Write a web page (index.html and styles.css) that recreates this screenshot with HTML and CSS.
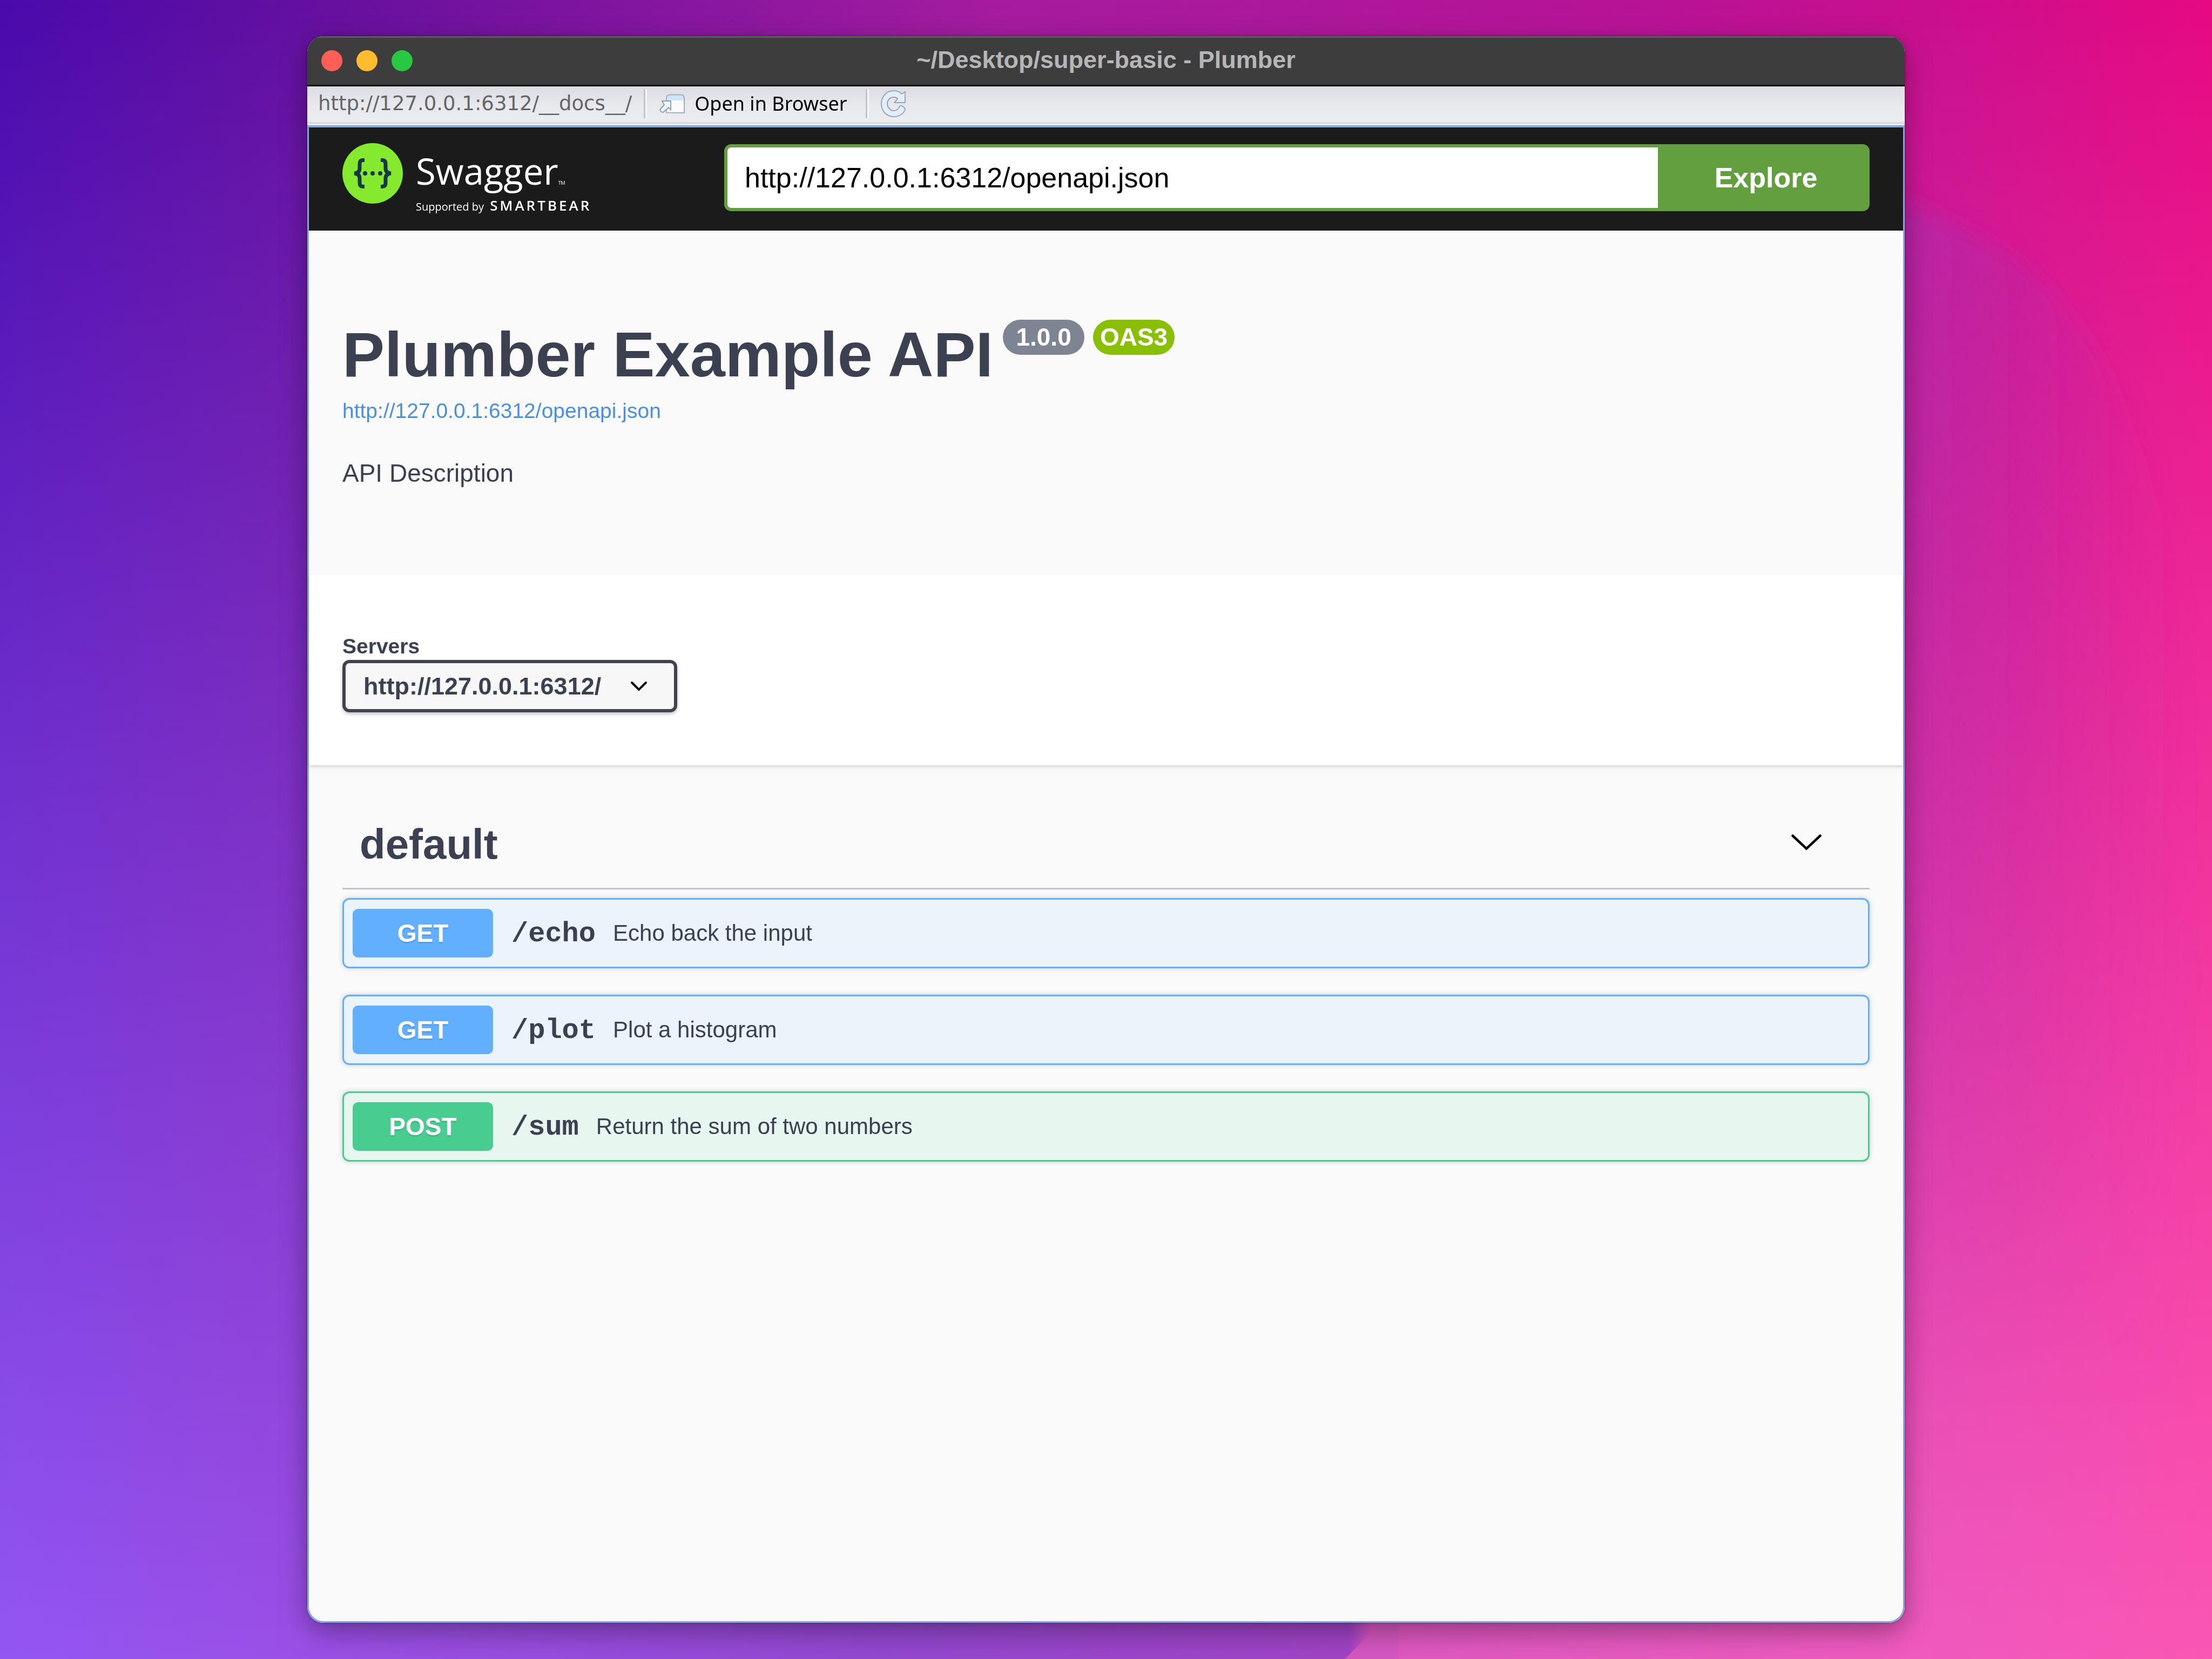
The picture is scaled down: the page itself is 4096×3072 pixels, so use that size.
FILE: index.html
```html
<!DOCTYPE html>
<html lang="en">
<head>
<meta charset="utf-8">
<title>~/Desktop/super-basic - Plumber</title>
<link rel="stylesheet" href="styles.css">
</head>
<body>
<svg class="wallpaper" viewBox="0 0 4096 3072" preserveAspectRatio="none" aria-hidden="true">
  <defs>
    <linearGradient id="base" x1="0" y1="0" x2="1" y2="0">
      <stop offset="0" stop-color="#4a0aac"/>
      <stop offset="0.14" stop-color="#64109f"/>
      <stop offset="0.45" stop-color="#a51c9f"/>
      <stop offset="0.75" stop-color="#b81396"/>
      <stop offset="0.88" stop-color="#cb0f8e"/>
      <stop offset="1" stop-color="#e60a82"/>
    </linearGradient>
    <linearGradient id="low" x1="0" y1="0" x2="1" y2="0">
      <stop offset="0" stop-color="#9456f2"/>
      <stop offset="0.14" stop-color="#9a50e6"/>
      <stop offset="0.4" stop-color="#9348d0"/>
      <stop offset="0.61" stop-color="#a044c4"/>
      <stop offset="0.62" stop-color="#dc58c0"/>
      <stop offset="0.86" stop-color="#ee5abe"/>
      <stop offset="1" stop-color="#fa56b4"/>
    </linearGradient>
    <linearGradient id="fade" x1="0" y1="0" x2="0" y2="1">
      <stop offset="0" stop-color="#000"/>
      <stop offset="0.5" stop-color="#888"/>
      <stop offset="1" stop-color="#fff"/>
    </linearGradient>
    <linearGradient id="ridge" gradientUnits="userSpaceOnUse" x1="3527" y1="400" x2="4060" y2="400">
      <stop offset="0" stop-color="#b428a8"/>
      <stop offset="0.4" stop-color="#c022a0" stop-opacity="0.8"/>
      <stop offset="1" stop-color="#dc2098" stop-opacity="0"/>
    </linearGradient>
    <linearGradient id="ridge-fade" x1="0" y1="0" x2="0" y2="1">
      <stop offset="0.1" stop-color="#ddd"/>
      <stop offset="0.4" stop-color="#777"/>
      <stop offset="0.85" stop-color="#000"/>
    </linearGradient>
    <mask id="down"><rect width="4096" height="3072" fill="url(#fade)"/></mask>
    <mask id="ridge-down"><rect width="4096" height="3072" fill="url(#ridge-fade)"/></mask>
    <filter id="soft"><feGaussianBlur stdDeviation="18"/></filter>
  </defs>
  <rect width="4096" height="3072" fill="url(#base)"/>
  <rect width="4096" height="3072" fill="url(#low)" mask="url(#down)"/>
  <path d="M2490 3072l66-65h34v65z" fill="#d457bf"/>
  <g mask="url(#ridge-down)"><path d="M3000 240C3400 310 3600 390 3743 490C3910 620 4000 860 4040 1160L4096 3072H3000z" fill="url(#ridge)" filter="url(#soft)"/></g>
</svg>
<main class="window">
  <header class="titlebar">
    <div class="lights">
      <button class="light close" aria-label="Close"></button>
      <button class="light minimise" aria-label="Minimise"></button>
      <button class="light zoom" aria-label="Zoom"></button>
    </div>
    <h1 class="window-title">~/Desktop/super-basic - Plumber</h1>
  </header>
  <nav class="toolbar">
    <span class="address">http://127.0.0.1:6312/__docs__/</span>
    <span class="separator"></span>
    <button class="tool open">
      <svg class="icon-open" viewBox="0 0 48 36" aria-hidden="true">
        <path d="M14 34.500V8q0-6.500 6.500-6.500h20.500q6 0 6 6.500v27z" fill="#f9fbfd"/>
        <path d="M14 12V8q0-6.500 6.500-6.500h20.500q6 0 6 6.500v4z" fill="#cfe5fb"/>
        <path d="M14 34.500V8q0-6.500 6.500-6.500h20.500q6 0 6 6.500v27z" fill="none" stroke="#9db0bf" stroke-width="2"/>
        <path d="M6 13h16v16l-4-4-10 9q-4 0-6-5l8-9z" fill="#f2f5f8" stroke="#8da2b0" stroke-width="2"/>
      </svg>
      Open in Browser
    </button>
    <span class="separator"></span>
    <button class="tool" aria-label="Refresh">
      <svg class="icon-refresh" viewBox="0 0 46 50" aria-hidden="true">
        <path d="M45 3v20H25l6-7q-2-3-7-3c-8 0-12 6-12 12s5 13 12 13c5 0 9-3 11-8q2-3 6 0 4 3 4 6c-3 8-11 13-21 13C11 49 1 39 1 25S11 1 24 1c7 0 11 2 15 6z" fill="#e4eefa" stroke="#9aa5b5" stroke-width="2" stroke-linejoin="round"/>
      </svg>
    </button>
  </nav>
  <section class="page">
    <form class="topbar">
      <a class="logo" href="#">
        <svg class="logo-mark" viewBox="0 0 112 112" aria-hidden="true">
          <circle cx="56" cy="56" r="56" fill="#85ea2d"/>
          <g fill="none" stroke="#173647" stroke-width="7">
            <path d="M41 31.500h-3q-6 0-6 7v8q0 9-10 9.500q10 .5 10 9.500v8q0 7 6 7h3"/>
            <path d="M71 31.500h3q6 0 6 7v8q0 9 10 9.500q-10 .5-10 9.500v8q0 7-6 7h-3"/>
          </g>
          <g fill="#173647"><circle cx="42" cy="56" r="4"/><circle cx="56" cy="56" r="4"/><circle cx="70" cy="56" r="4"/></g>
        </svg>
        <span class="logo-text">
          <span class="logo-name">Swagger<small class="logo-tm">TM</small></span>
          <span class="logo-by">Supported by <b class="logo-maker">SMARTBEAR</b></span>
        </span>
      </a>
      <div class="search">
        <input class="search-url" type="text" value="http://127.0.0.1:6312/openapi.json" aria-label="Definition URL">
        <button class="search-go" type="button">Explore</button>
      </div>
    </form>
    <section class="info">
      <h2 class="title">Plumber Example API<span class="badges"><span class="badge">1.0.0</span><span class="badge oas">OAS3</span></span></h2>
      <a class="definition" href="#">http://127.0.0.1:6312/openapi.json</a>
      <p class="description">API Description</p>
    </section>
    <section class="schemes">
      <label class="servers-label" for="servers">Servers</label>
      <div class="select">
        <select class="servers" id="servers"><option>http://127.0.0.1:6312/</option></select>
        <svg class="select-arrow" viewBox="0 0 32 20" aria-hidden="true"><path d="M3 3l13 13L29 3" fill="none" stroke="#000" stroke-width="4" stroke-linecap="round"/></svg>
      </div>
    </section>
    <section class="operations">
      <h3 class="tag">default
        <button class="tag-toggle" aria-label="Collapse">
          <svg class="tag-arrow" viewBox="0 0 56 30" aria-hidden="true"><path d="M2.500 2.500L28 26.500L53.500 2.500" fill="none" stroke="#000" stroke-width="4.500" stroke-linecap="round"/></svg>
        </button>
      </h3>
      <div class="list">
        <div class="op get"><span class="method">GET</span><span class="path">/echo</span><span class="summary">Echo back the input</span></div>
        <div class="op get"><span class="method">GET</span><span class="path">/plot</span><span class="summary">Plot a histogram</span></div>
        <div class="op post"><span class="method">POST</span><span class="path">/sum</span><span class="summary">Return the sum of two numbers</span></div>
      </div>
    </section>
  </section>
</main>
</body>
</html>
```
FILE: styles.css
```css
* { box-sizing: border-box; margin: 0; }

body {
  min-height: 100vh;
  display: flex;
  padding: 67px 569px;
  font-family: "Liberation Sans", Arial, sans-serif;
  color: #3b4151;
}

button { border: 0; padding: 0; background: none; font: inherit; color: inherit; }
svg { display: block; }

.wallpaper { position: fixed; inset: 0; width: 100%; height: 100%; z-index: -1; }

.window {
  flex: 1;
  display: flex;
  flex-direction: column;
  border-radius: 30px;
  overflow: hidden;
  background: #fafafa;
  box-shadow: 0 0 4px rgba(0, 0, 0, .4), 0 16px 50px rgba(0, 0, 0, .35);
}

.titlebar {
  height: 93px;
  display: grid;
  grid-template-columns: 1fr auto 1fr;
  align-items: center;
  padding: 0 26px 2px;
  background: #3d3d3d;
  border-top: 3px solid #5c5c5c;
  border-bottom: 3px solid #0a0a0a;
}
.lights { display: flex; gap: 26px; }
.light { width: 39px; height: 39px; border-radius: 50%; }
.close { background: #ff5f57; }
.minimise { background: #febc2e; }
.zoom { background: #28c840; }
.window-title { padding-bottom: 4px; font-size: 45px; line-height: 52px; color: #b6b6b6; }

.toolbar {
  height: 72px;
  display: flex;
  align-items: center;
  gap: 22px;
  padding: 0 20px 8px;
  font: 36px/48px "Noto Sans", sans-serif;
  background: linear-gradient(#dcdde2, #e8e9ed 50%, #ecedf0);
  box-shadow: inset 0 -3px #ecedf0, inset 0 -6px #d6d8dc;
}
.address { color: #666; font-family: "DejaVu Sans", sans-serif; font-size: 37px; }
.separator { width: 6px; height: 54px; background: linear-gradient(90deg, #c2c4c9 50%, #f6f6f8 50%); }
.tool { display: flex; align-items: center; gap: 18px; color: #000; }
.open { padding-right: 12px; }
.icon-open { width: 48px; height: 36px; }
.icon-refresh { width: 46px; height: 50px; }

.page {
  flex: 1;
  border: 3px solid #86a7dc;
  border-top-width: 4px;
  border-radius: 0 0 30px 30px;
}

.topbar {
  height: 191px;
  display: flex;
  align-items: flex-start;
  gap: 250px;
  padding: 29px 62px 34px;
  background: #1b1b1b;
}
.logo { width: 457px; display: flex; gap: 24px; color: #fff; text-decoration: none; font-family: "Open Sans", sans-serif; }
.logo-mark { flex: none; width: 112px; height: 112px; }
.logo-text { white-space: nowrap; }
.logo-name { display: block; padding-top: 24px; font-size: 67px; font-weight: 400; line-height: 54px; }
.logo-tm { font-size: 9px; }
.logo-by { display: block; font-size: 20px; line-height: 28px; }
.logo-maker { margin-left: 6px; font-size: 26px; font-weight: 600; letter-spacing: 4px; }
.search { flex: 1; align-self: center; display: flex; height: 124px; }
.search-url {
  flex: 1;
  min-width: 0;
  border: 6px solid #62a03f;
  border-right: 0;
  border-radius: 13px 0 0 13px;
  padding: 0 32px;
  font: 52px "Liberation Sans", Arial, sans-serif;
  color: #000;
  background: #fff;
}
.search-go { width: 392px; padding-left: 8px; border-radius: 0 13px 13px 0; background: #62a03f; color: #fff; font-size: 52px; font-weight: 700; }

.info { padding: 163px 62px 160px; }
.title { display: flex; align-items: flex-start; font-size: 117px; line-height: 134px; }
.badges { display: flex; gap: 16px; margin-left: 18px; padding-top: 2px; }
.badge { width: 151px; border-radius: 33px; background: #7d8492; color: #fff; font-size: 46px; line-height: 65px; text-align: center; }
.oas { background: #89bf04; }
.definition { display: block; margin-top: 13px; font-size: 39px; line-height: 48px; color: #4990e2; text-decoration: none; }
.description { margin-top: 63px; font-size: 46px; line-height: 56px; }

.schemes { padding: 108px 62px 98px; background: #fff; box-shadow: 0 3px 6px rgba(0, 0, 0, .15); }
.servers-label { display: block; font-size: 39px; font-weight: 700; line-height: 50px; }
.select { position: relative; width: 620px; }
.servers {
  appearance: none;
  display: block;
  width: 100%;
  height: 97px;
  padding: 0 33px;
  border: 6px solid #41444e;
  border-radius: 13px;
  background: #f7f7f7;
  box-shadow: 0 3px 6px rgba(0, 0, 0, .25);
  font: bold 45px "Liberation Sans", Arial, sans-serif;
  color: #3b4151;
}
.select-arrow { position: absolute; right: 55px; top: 39px; width: 32px; height: 20px; }

.operations { padding: 65px 62px; }
.tag {
  display: flex;
  align-items: center;
  justify-content: space-between;
  height: 165px;
  padding: 0 89px 0 32px;
  border-bottom: 3px solid #c4c5cb;
  font-size: 78px;
}
.tag-toggle { padding-bottom: 6px; }
.list { display: grid; gap: 49px; padding-top: 16px; }
.op { display: flex; align-items: center; gap: 32px; height: 130px; padding: 0 16px; border: 3px solid; border-radius: 13px; box-shadow: 0 0 10px rgba(0, 0, 0, .19); }
.get { border-color: #61affe; background: #ebf3fb; }
.post { border-color: #49cc90; background: #e8f6f0; }
.method { width: 260px; margin-right: 2px; border-radius: 10px; color: #fff; font-size: 46px; font-weight: 700; line-height: 90px; text-align: center; text-shadow: 0 3px 0 rgba(0, 0, 0, .1); }
.get .method { background: #61affe; }
.post .method { background: #49cc90; }
.path { padding-top: 3px; font: bold 52px "Liberation Mono", monospace; }
.summary { font-size: 42px; }
.tag-arrow { width: 56px; height: 30px; }
```
